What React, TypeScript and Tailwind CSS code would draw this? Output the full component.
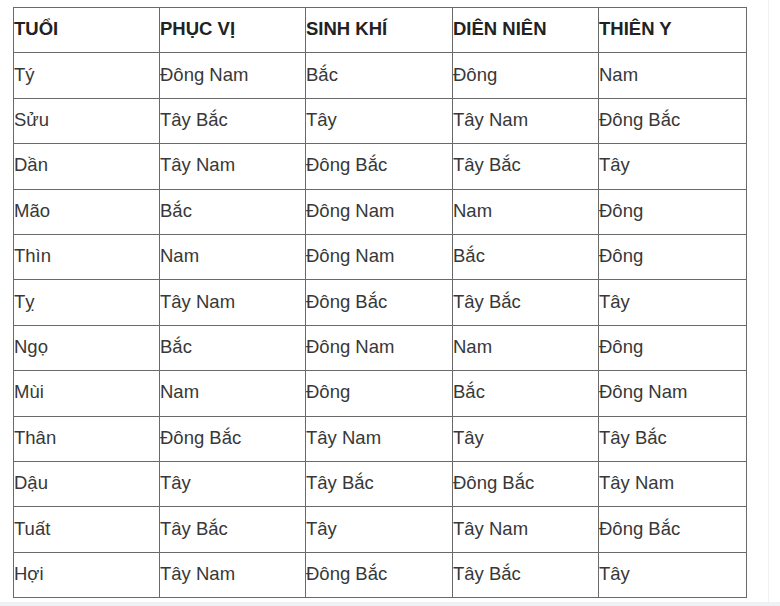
const HEADERS = ["TUỔI", "PHỤC VỊ", "SINH KHÍ", "DIÊN NIÊN", "THIÊN Y"];

const ROWS: string[][] = [
  ["Tý", "Đông Nam", "Bắc", "Đông", "Nam"],
  ["Sửu", "Tây Bắc", "Tây", "Tây Nam", "Đông Bắc"],
  ["Dần", "Tây Nam", "Đông Bắc", "Tây Bắc", "Tây"],
  ["Mão", "Bắc", "Đông Nam", "Nam", "Đông"],
  ["Thìn", "Nam", "Đông Nam", "Bắc", "Đông"],
  ["Tỵ", "Tây Nam", "Đông Bắc", "Tây Bắc", "Tây"],
  ["Ngọ", "Bắc", "Đông Nam", "Nam", "Đông"],
  ["Mùi", "Nam", "Đông", "Bắc", "Đông Nam"],
  ["Thân", "Đông Bắc", "Tây Nam", "Tây", "Tây Bắc"],
  ["Dậu", "Tây", "Tây Bắc", "Đông Bắc", "Tây Nam"],
  ["Tuất", "Tây Bắc", "Tây", "Tây Nam", "Đông Bắc"],
  ["Hợi", "Tây Nam", "Đông Bắc", "Tây Bắc", "Tây"],
];

export default function App() {
  return (
    <div className="relative w-[780px] h-[606px] bg-white overflow-hidden font-['Liberation_Sans',Arial,sans-serif]">
      {/* faint page edges from the source capture */}
      <div className="absolute left-[768px] top-0 w-px h-full bg-[#f1f1f1]" />
      <div className="absolute left-0 top-[602px] w-full h-[4px] bg-[#f0f1f3]" />

      <div className="pl-[13px] pt-[7px]">
        <table className="table-fixed border-collapse w-[733px] text-[18.5px] text-[#383838]">
          <colgroup>
            <col className="w-[146px]" />
            <col className="w-[146px]" />
            <col className="w-[147px]" />
            <col className="w-[146px]" />
            <col className="w-[148px]" />
          </colgroup>
          <thead>
            <tr className="h-[45.4px]">
              {HEADERS.map((h) => (
                <th
                  key={h}
                  className="border border-[#6a6a6a] text-left align-middle p-0 pb-[2px] font-bold text-[#222]"
                >
                  {h}
                </th>
              ))}
            </tr>
          </thead>
          <tbody>
            {ROWS.map((row, i) => (
              <tr key={i} className="h-[45.4px]">
                {row.map((cell, j) => (
                  <td key={j} className="border border-[#6a6a6a] align-middle p-0 pb-[2px] whitespace-nowrap">
                    {cell}
                  </td>
                ))}
              </tr>
            ))}
          </tbody>
        </table>
      </div>
    </div>
  );
}
